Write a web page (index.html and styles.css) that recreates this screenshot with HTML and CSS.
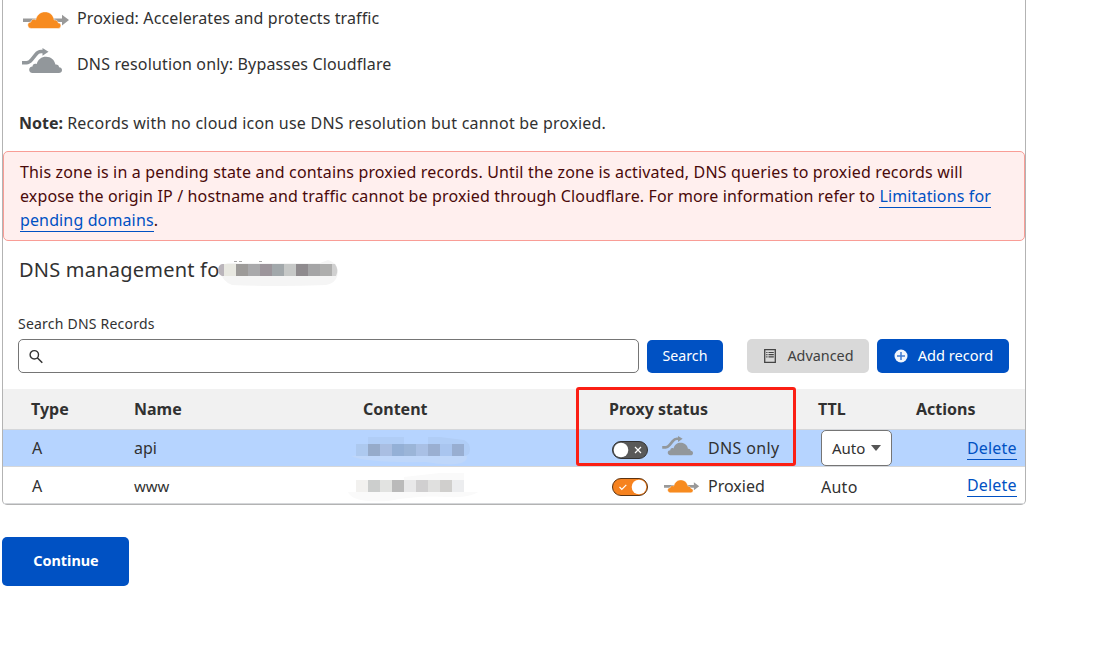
FILE: index.html
```html
<!DOCTYPE html>
<html lang="en">
<head>
<meta charset="utf-8">
<title>DNS management</title>
<link rel="stylesheet" href="styles.css">
</head>
<body>
<svg class="defs" width="0" height="0" aria-hidden="true">
  <symbol id="proxied" viewBox="0 0 47 18">
    <path fill="#999" d="M0 6.500h39V2.800l7 5.200-7 5.400V10H0z"/>
    <path fill="#f78b1f" stroke="#fff" stroke-width=".5" d="M8.500 16.500C5.700 16.500 4.600 14.700 4.800 12.600 5 11 6.400 10 8 10c0-2.300 2.800-3.600 4.700-2.200C13.700 3 17.500-.2 22-.2c4.800 0 8.500 3.500 9.200 8.200 2-.4 3.800.9 3.900 2.800 2.100.2 3 1.500 2.800 3.100-.2 1.600-1.300 2.600-3 2.600z"/>
  </symbol>
  <symbol id="bypass" viewBox="0 0 41 26">
    <path fill="none" stroke="#92979b" stroke-width="3.500" stroke-linejoin="round" d="M0 14.800h4.500c2.300 0 3.700-1.400 5.200-3.200l4-5C15.400 4.500 17 3.600 19 3.600h3"/>
    <path fill="#92979b" d="M20.500 0 26.500 3.700l-6 4z"/>
    <path fill="#92979b" d="M10.700 25C8.300 25 7 23.300 7.200 21.200c.2-1.700 1.500-2.700 3.300-2.800 0-2.300 2.300-3.500 4.200-2.300C15.800 11.300 19.500 8.700 24 8.700c5 0 8.700 3.200 9.400 7.900 2-.3 3.600.8 3.600 2.700 2.100.2 3.100 1.300 3 3-.1 1.700-1.400 2.700-3 2.700z"/>
  </symbol>
</svg>

<main class="panel">
  <section class="intro">
    <div class="legend legend-first"><svg class="ic-proxied"><use href="#proxied"/></svg><span class="t-proxied">Proxied: Accelerates and protects traffic</span></div>
    <div class="legend"><svg class="ic-bypass"><use href="#bypass"/></svg><span class="t-bypass">DNS resolution only: Bypasses Cloudflare</span></div>
    <p class="note"><b>Note:</b> <span>Records with no cloud icon use DNS resolution but cannot be proxied.</span></p>
  </section>

  <div class="alert">
    <span class="a1">This zone is in a pending state and contains proxied records. Until the zone is activated, DNS queries to proxied records will</span><br>
    <span class="a2">expose the origin IP / hostname and traffic cannot be proxied through Cloudflare. For more information refer to <a>Limitations for</a></span><br>
    <span class="a3"><a>pending domains</a>.</span>
  </div>

  <h2 class="title"><span>DNS management fo</span>
    <svg class="mosaic-title" width="120" height="28" viewBox="218 259 120 28">
      <path fill="#f5f5f5" d="M220 271q0-6 8-8h92l8-3q8 2 10 10 0 13-12 15-50 2-94 0-10-4-12-14z"/>
      <path stroke="#aaa" stroke-width="1" stroke-dasharray="3 2" d="M234 261.500h8M259 261.500h3"/>
      <path fill="#bab5bb" d="M218 271q0-6 4-7h2v12h-2q-3-1-4-5z"/>
      <g><rect x="224" y="264" width="12" height="12" fill="#e8e8e1"/><rect x="236" y="264" width="12" height="12" fill="#9d9b99"/><rect x="248" y="264" width="12" height="12" fill="#a9a9ab"/><rect x="260" y="264" width="12" height="12" fill="#9c959b"/><rect x="272" y="264" width="12" height="12" fill="#a2a8ab"/><rect x="284" y="264" width="12" height="12" fill="#c6c8c7"/><rect x="296" y="264" width="12" height="12" fill="#8f8b8e"/><rect x="308" y="264" width="12" height="12" fill="#a5a5a6"/><rect x="320" y="264" width="12" height="12" fill="#aeaead"/></g>
      <path fill="#d0d0d0" d="M332 264h3q4 6 1 12h-4z"/>
    </svg>
  </h2>

  <label class="search-label"><span>Search DNS Records</span></label>
  <div class="toolbar">
    <div class="input"><svg width="16" height="16" viewBox="0 0 16 16"><g fill="none" stroke="#333"><circle cx="6.300" cy="5.800" r="4.200" stroke-width="1.400"/><path stroke-width="1.500" d="m9.300 8.800 5 5"/></g></svg></div>
    <button class="btn btn-search"><span>Search</span></button>
    <button class="btn btn-adv"><svg width="12" height="14" viewBox="0 0 12 14"><path fill="none" stroke="#444" stroke-width="1.300" d="M.7.700h10.600v12.600H.7z"/><path stroke="#444" stroke-width="1.200" d="M2.200 3.500h1.300M4.500 3.500h5.300M2.200 5.700h1.300M4.500 5.700h5.300M2.200 7.900h1.300M4.500 7.900h5.300"/></svg><span>Advanced</span></button>
    <button class="btn btn-add"><svg width="14" height="14" viewBox="0 0 14 14"><circle cx="7" cy="7" r="6.500" fill="#f2f6fc"/><path stroke="#3f7bd1" stroke-width="1.500" d="M7 3v8M3 7h8"/></svg><span>Add record</span></button>
  </div>

  <div class="table">
    <div class="row head"><b>Type</b><b>Name</b><b>Content</b><b>Proxy status</b><b>TTL</b><b>Actions</b></div>
    <div class="row selected">
      <span class="type">A</span><span class="name">api</span>
      <svg class="mosaic" width="125" height="32" viewBox="350 434 125 32">
        <path fill="#bfd7fa" d="M351 456q20-2 115-2 4 8-10 10-14 1-30-2-60 1-75-6z"/>
        <path fill="#b0cdf6" d="M368 437h36v7h24v-7h12l24 3q6 3 6 9 0 7-6 7H368z"/>
        <rect x="356" y="444" width="12" height="12" fill="#adc9ef"/><rect x="368" y="444" width="12" height="12" fill="#96abca"/><rect x="380" y="444" width="12" height="12" fill="#a9bee2"/><rect x="392" y="444" width="12" height="12" fill="#94b0d6"/><rect x="404" y="444" width="12" height="12" fill="#9bb5d8"/><rect x="416" y="444" width="12" height="12" fill="#a9c0e5"/><rect x="428" y="444" width="12" height="12" fill="#9aafd1"/><rect x="440" y="444" width="12" height="12" fill="#a9c5ef"/><rect x="452" y="444" width="12" height="12" fill="#98aed1"/>
      </svg>
      <div class="status"><svg class="toggle" width="36" height="18" viewBox="0 0 36 18"><rect x=".5" y=".5" width="35" height="17" rx="8.500" fill="#595959" stroke="#333"/><circle cx="9" cy="9" r="7.300" fill="#fff"/><path fill="none" stroke="#fff" stroke-width="1.200" d="m23 6 6 6m0-6-6 6"/></svg><svg class="ic-bypass-s"><use href="#bypass"/></svg><span class="s-dns">DNS only</span></div>
      <div><span class="select"><span class="s-auto">Auto</span><svg width="10" height="6" viewBox="0 0 10 6"><path fill="#555" d="M0 0h10L5 6z"/></svg></span></div>
      <a class="delete">Delete</a>
    </div>
    <div class="row">
      <span class="type">A</span><span class="name www">www</span>
      <svg class="mosaic mosaic-low" width="135" height="32" viewBox="350 472 135 32">
        <path fill="#fafafa" d="M348 492h130q-8 6-30 5-30-2-60 4-36 2-40-9zM404 477l36-4h24v7h-60z"/>
        <rect x="356" y="480" width="12" height="12" fill="#f2f1ef"/><rect x="368" y="480" width="12" height="12" fill="#cccecd"/><rect x="380" y="480" width="12" height="12" fill="#e2e3e1"/><rect x="392" y="480" width="12" height="12" fill="#bababa"/><rect x="404" y="480" width="12" height="12" fill="#e8e8e9"/><rect x="416" y="480" width="12" height="12" fill="#d0cfd0"/><rect x="428" y="480" width="12" height="12" fill="#e0e0df"/><rect x="440" y="480" width="12" height="12" fill="#d0cfcd"/><rect x="452" y="480" width="12" height="12" fill="#ecedef"/>
      </svg>
      <div class="status"><svg class="toggle" width="36" height="18" viewBox="0 0 36 18"><rect x=".5" y=".5" width="35" height="17" rx="8.500" fill="#f6821f" stroke="#5b3413"/><circle cx="27" cy="9" r="7.300" fill="#fff"/><path fill="none" stroke="#fff" stroke-width="1.200" d="m7.500 9 2.300 2.300 4.500-4.500"/></svg><svg class="ic-proxied-s"><use href="#proxied"/></svg><span class="s-prox">Proxied</span></div>
      <div class="ttl"><span class="ttl-auto">Auto</span></div>
      <a class="delete">Delete</a>
    </div>
    <div class="highlight"></div>
  </div>
</main>
<button class="btn continue"><span>Continue</span></button>
</body>
</html>
```
FILE: styles.css
```css
* { box-sizing: border-box; }
body { margin: 0; width: 1118px; height: 650px; overflow: hidden; background: #fff; color: #313131; font: 16px/24px "Noto Sans", "Open Sans", sans-serif; }
.defs { position: absolute; }
svg { display: block; flex: none; overflow: visible; }
span { white-space: nowrap; }
.panel { margin-left: 2px; width: 1024px; height: 505px; border: 1px solid #b3b3b3; border-top: 0; border-radius: 0 0 5px 5px; }
.intro { height: 151px; padding: 6px 16px 0; }
.legend { display: flex; align-items: center; height: 46px; }
.legend-first { height: 24px; margin-bottom: 11px; }
.ic-proxied { width: 47px; height: 18px; margin: 6px 7px 0 4px; }
.ic-bypass { width: 41px; height: 26px; margin: -7px 14px 0 3px; }
.t-proxied { letter-spacing: .12px; }
.t-bypass { letter-spacing: .15px; }
.note { margin: 24px 0 0; }
.note span { letter-spacing: .23px; }
.alert { height: 90px; padding: 8px 16px; border: 1px solid #f99d96; border-radius: 5px; background: #ffefee; color: #4a0a0a; }
.a1 { letter-spacing: .165px; }
.a2 { letter-spacing: .145px; }
.a3 { letter-spacing: .13px; }
a { color: #0051c3; border-bottom: 1px solid #0051c3; }
.title { display: flex; align-items: center; height: 28px; margin: 15px 0 0 16px; font-size: 20px; font-weight: 400; }
.title span { width: 199px; letter-spacing: .22px; }
.mosaic-title { margin-top: 6px; }
.search-label { display: block; margin: 28px 0 0 15px; height: 24px; font-size: 14px; letter-spacing: .22px; }
.toolbar { display: flex; align-items: flex-start; height: 53px; padding: 3px 0 0 15px; }
.input { width: 621px; height: 34px; border: 1px solid #757575; border-radius: 5px; padding: 9px 0 0 9px; }
.btn { display: flex; align-items: center; justify-content: center; border: 0; border-radius: 5px; height: 34px; padding: 0; background: #0051c3; color: #fff; font: 14.4px/24px "Noto Sans", "Open Sans", sans-serif; }
.btn span { margin-top: -2px; }
.btn-search { width: 76px; height: 33px; margin: 1px 24px 0 8px; font-size: 14.2px; }
.btn-search span { margin-top: -1px; }
.btn-adv { width: 122px; padding-left: 2px; background: #d9d9d9; color: #404040; gap: 11px; }
.btn-adv span { margin-top: 0; }
.btn-add { width: 132px; margin-left: 8px; padding-left: 1px; gap: 10px; font-size: 14.6px; }
.table { position: relative; }
.row { display: grid; grid-template-columns: 103px 216px 256px 206px 146px 50px; align-items: center; height: 37px; padding-left: 28px; border-bottom: 1px solid #d5d7da; }
.head { height: 41px; background: #f1f1f1; grid-template-columns: 103px 229px 246px 209px 98px 100px; }
.selected { background: #b6d4ff; }
.type { margin-left: 1px; }
.www { font-size: 15px; }
.mosaic { align-self: start; margin-top: 4px; }
.mosaic-low { margin-top: 5px; }
.status { display: flex; align-items: center; padding-left: 6px; height: 36px; }
.toggle { margin-top: 3px; }
.ic-bypass-s { width: 32px; height: 20px; margin: -4px 14px 0 14px; }
.ic-proxied-s { width: 36px; height: 14px; margin: 3px 8px 0 16px; }
.s-dns { letter-spacing: .35px; }
.select { display: flex; align-items: center; justify-content: space-between; width: 71px; height: 36px; margin-left: 9px; padding: 0 10px; border: 1px solid #757575; border-radius: 5px; background: #fff; font-size: 15px; }
.s-auto { margin-top: -1px; }
.ttl { padding: 3px 0 0 9px; }
.ttl-auto { letter-spacing: .25px; }
.delete { justify-self: start; line-height: 22px; margin: 0 0 0 9px; letter-spacing: .15px; }
.highlight { position: absolute; left: 573px; top: -2px; width: 220px; height: 79px; border: 3px solid #fb1f14; border-radius: 3px; }
.continue { width: 127px; height: 49px; margin: 32px 0 0 2px; padding-left: 1px; font-weight: 700; }
```
